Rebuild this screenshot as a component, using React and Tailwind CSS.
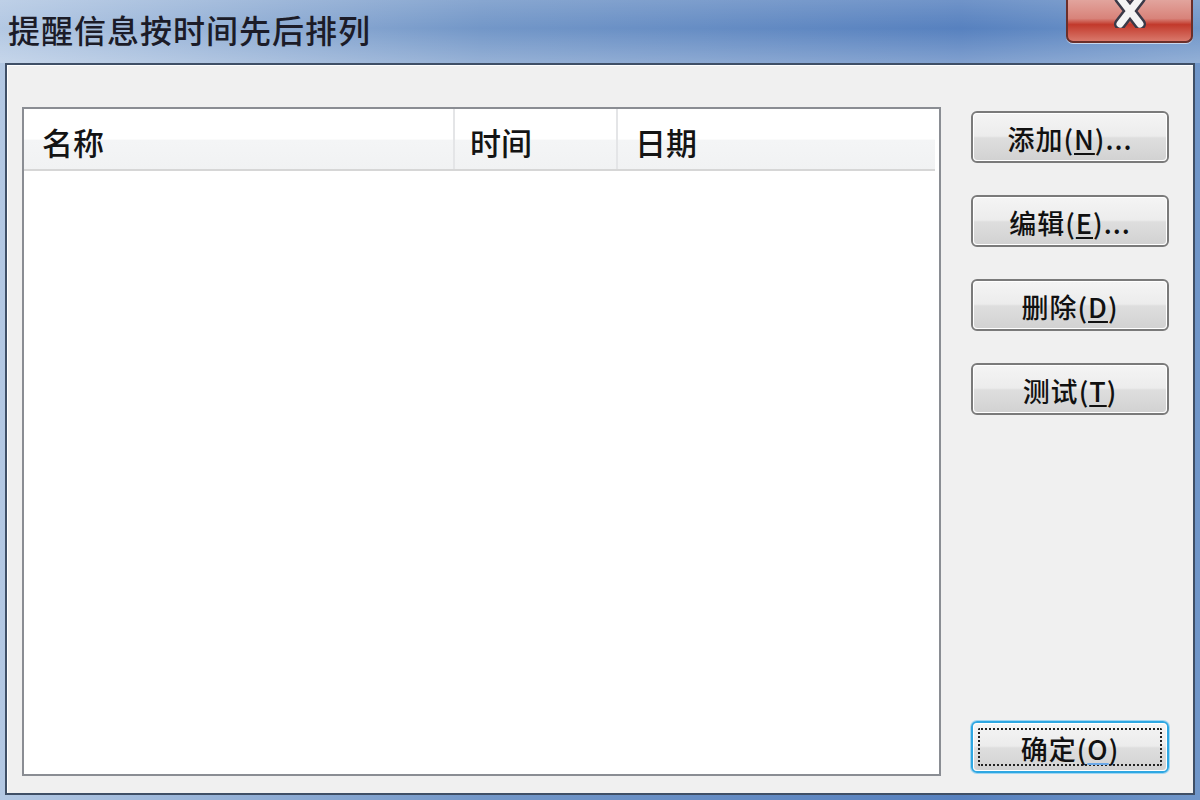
import React from "react";

const cjk = { fontFamily: '"Noto Sans CJK SC", "Noto Sans", sans-serif' };

function DlgButton({ label, hot, rest, focused }) {
  return (
    <button
      className={
        "relative w-[198px] h-[52px] rounded-[6px] border-2 flex items-center justify-center text-[27px] font-medium text-[#111] " +
        (focused
          ? "border-[#2fa7e2] shadow-[0_0_0_1px_#9fd6f2]"
          : "border-[#7a7a7a]")
      }
      style={cjk}
    >
      <span className="absolute inset-0 rounded-[4px] border border-white bg-[linear-gradient(to_bottom,#f4f4f4_0%,#ececec_48%,#dedede_52%,#d2d2d2_100%)]" />
      {focused && (
        <span className="absolute inset-[5px] border-2 border-dotted border-[#222] rounded-[2px]" />
      )}
      <span className="relative leading-none tracking-[1px] pt-[2px]">
        {label}(<u className={"underline-offset-[3px] " + (focused ? "decoration-[#6aa8e8]" : "")}>{hot}</u>){rest}
      </span>
    </button>
  );
}

export default function App() {
  return (
    <div className="w-[1200px] h-[800px] overflow-hidden flex flex-col bg-[linear-gradient(to_right,#b3c8e3,#7397c8_40%,#5781bf_80%,#7096c9)]">
      {/* title bar */}
      <div className="h-[63px] flex justify-between items-start bg-[linear-gradient(to_bottom,rgba(255,255,255,0.15),rgba(255,255,255,0)_45%,rgba(255,255,255,0.25))]">
        <div className="pl-[8px] pt-[9px] text-[32px] font-medium leading-[40px] text-[#1c1c28] tracking-[1px]" style={cjk}>
          提醒信息按时间先后排列
        </div>
        <div className="mr-[7px] w-[127px] h-[43px] rounded-b-[7px] border-2 border-t-0 border-[#6b2f2a] bg-[linear-gradient(to_bottom,#e2a49d_0%,#d8837a_45%,#c2392b_60%,#d9786b_100%)] flex justify-center overflow-hidden shadow-[0_1px_0_#c8d8ee]">
          <svg width="36" height="34" viewBox="0 0 36 34" className="-mt-[6px]">
            <path d="M8 4 L28 30 M28 4 L8 30" stroke="#3a3a48" strokeWidth="12" strokeLinecap="round" />
            <path d="M8 4 L28 30 M28 4 L8 30" stroke="#f4f4f4" strokeWidth="7" strokeLinecap="round" />
          </svg>
        </div>
      </div>

      {/* client area */}
      <div className="mx-[5px] h-[732px] border-2 border-[#3f4f66] bg-[#f0f0f0]">
        <div className="h-full border-t border-l border-white flex pl-[14px] pr-[21px]">
          <div className="mt-[41px] w-[919px] h-[669px] border-2 border-[#8a8d93] bg-white flex flex-col">
            <div className="mr-[4px] h-[62px] flex border-b-2 border-[#d6d6d6] bg-[linear-gradient(to_bottom,#ffffff_0%,#ffffff_50%,#f4f5f6_52%,#f1f2f3_100%)] text-[31px] font-medium text-[#141414]" style={cjk}>
              <div className="w-[431px] pl-[18px] pt-[6px] flex items-center border-r-2 border-[#e4e5e7]">名称</div>
              <div className="w-[163px] pl-[15px] pt-[6px] flex items-center border-r-2 border-[#e4e5e7]">时间</div>
              <div className="flex-1 pl-[17px] pt-[6px] flex items-center">日期</div>
            </div>
          </div>
          <div className="ml-[30px] pt-[45px] pb-[20px] flex flex-col gap-[32px] h-full">
            <DlgButton label="添加" hot="N" rest="..." />
            <DlgButton label="编辑" hot="E" rest="..." />
            <DlgButton label="删除" hot="D" rest="" />
            <DlgButton label="测试" hot="T" rest="" />
            <div className="mt-auto">
              <DlgButton label="确定" hot="O" rest="" focused />
            </div>
          </div>
        </div>
      </div>
    </div>
  );
}
